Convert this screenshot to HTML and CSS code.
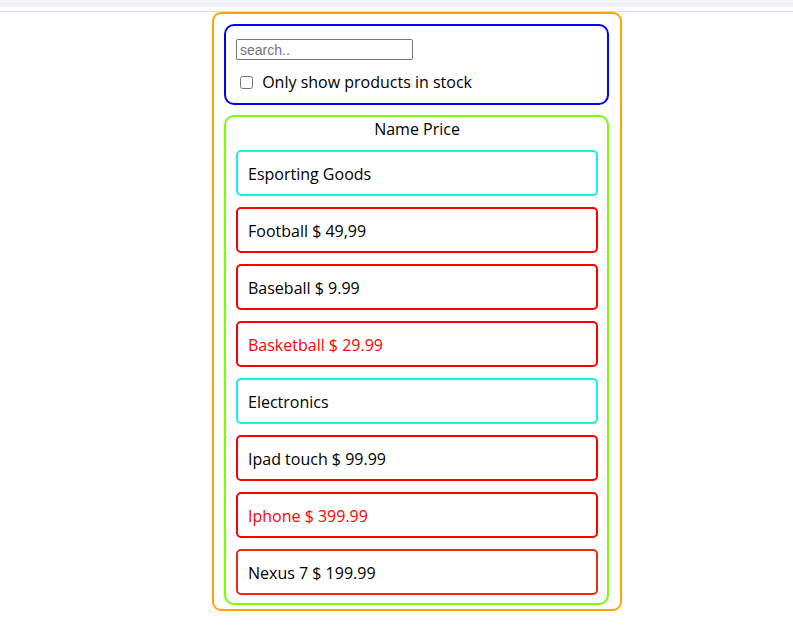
FILE: index.html
```html
<!DOCTYPE html>
<html lang="en">
<head>
<meta charset="utf-8">
<title>Products</title>
<link rel="stylesheet" href="styles.css">
</head>
<body>
<div class="topbar"></div>
<div class="rule"></div>
<div class="app">
  <div class="search">
    <input class="search-input" type="text" placeholder="search..">
    <label class="stock"><input class="check" type="checkbox"> Only show products in stock</label>
  </div>
  <div class="table">
    <div class="head">Name Price</div>
    <div class="row cat">Esporting Goods</div>
    <div class="row prod">Football $ 49,99</div>
    <div class="row prod">Baseball $ 9.99</div>
    <div class="row prod out">Basketball $ 29.99</div>
    <div class="row cat">Electronics</div>
    <div class="row prod">Ipad touch $ 99.99</div>
    <div class="row prod out">Iphone $ 399.99</div>
    <div class="row prod last">Nexus 7 $ 199.99</div>
  </div>
</div>
</body>
</html>
```

FILE: styles.css
```css
* { box-sizing: border-box; }
html, body { margin: 0; padding: 0; background: #fff; }
body {
  font-family: "Comic Sans MS", "Open Sans", sans-serif;
  font-size: 16px;
  line-height: 22px;
  color: #000;
}
.topbar { height: 7px; background: #f1f3f4; }
.rule { height: 1px; margin-top: 4px; background: #dadce0; }
.app {
  margin-left: 212px;
  width: 410px;
  border: 2px solid #ffa500;
  border-radius: 9px;
  padding: 10px 11px 4px 10px;
  display: flex;
  flex-direction: column;
  gap: 10px;
}
.search {
  border: 2px solid #0000ff;
  border-radius: 10px;
  padding: 13px 10px 10px 10px;
  display: flex;
  flex-direction: column;
  align-items: flex-start;
  gap: 11px;
}
.search-input {
  width: 177px;
  height: 21px;
  margin: 0;
  border: 1px solid #767676;
  border-radius: 2px;
  padding: 1px 3px;
  font-family: "Liberation Sans", Arial, sans-serif;
  font-size: 14px;
}
.search-input::placeholder { color: #757575; }
.stock { display: block; height: 22px; }
.check { width: 13px; height: 13px; margin: 3px 5px 3px 4px; vertical-align: -1px; }
.table {
  border: 2px solid #7cfc00;
  border-radius: 10px;
  padding: 1px 9px 8px 10px;
  display: flex;
  flex-direction: column;
  gap: 11px;
}
.head { text-align: center; height: 22px; margin-bottom: -1px; }
.row {
  height: 46px;
  border: 2px solid red;
  border-radius: 5px;
  padding: 1px 10px 0 10px;
  display: flex;
  align-items: center;
}
.cat { border-color: #14f0ec; }
.out { color: #ff0000; }
.last { border-color: #ec2a14; }
```
